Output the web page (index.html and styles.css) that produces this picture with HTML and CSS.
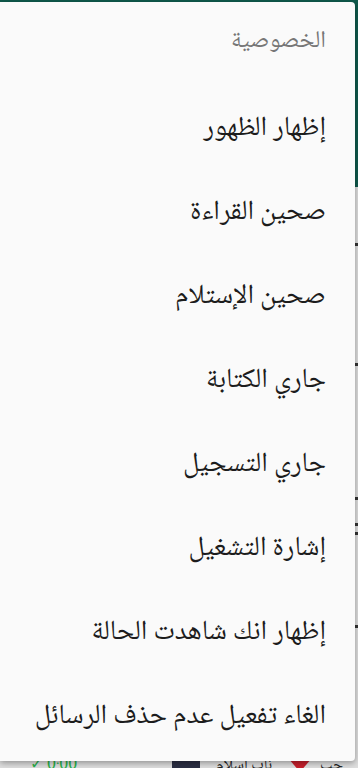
FILE: index.html
```html
<!DOCTYPE html>
<html lang="ar">
<head>
<meta charset="utf-8">
<title>الخصوصية</title>
<link rel="stylesheet" href="styles.css">
</head>
<body>
<div class="screen">
  <div class="appbar"></div>
  <div class="list">
    <div class="row r1"><span class="mark"></span></div>
    <div class="row r2"><span class="mark"></span></div>
    <div class="row r3"><span class="mark"></span></div>
    <div class="row r4"><span class="mark"></span><span class="mark"></span></div>
    <div class="row r5"><span class="mark"></span></div>
    <div class="last">
      <span class="time">✓ 0:00</span>
      <span class="gap"></span>
      <span class="avatar"></span>
      <span class="name">ناب اسلام</span>
      <span class="tri"></span>
      <span class="name2">حب</span>
    </div>
  </div>
</div>
<div class="menu" dir="rtl">
  <div class="title">الخصوصية</div>
  <div class="item">إظهار الظهور</div>
  <div class="item">صحين القراءة</div>
  <div class="item">صحين الإستلام</div>
  <div class="item">جاري الكتابة</div>
  <div class="item">جاري التسجيل</div>
  <div class="item">إشارة التشغيل</div>
  <div class="item">إظهار انك شاهدت الحالة</div>
  <div class="item">الغاء تفعيل عدم حذف الرسائل</div>
</div>
</body>
</html>
```

FILE: styles.css
```css
html, body {
  margin: 0;
  padding: 0;
  width: 358px;
  height: 768px;
  overflow: hidden;
  font-family: "Noto Naskh Arabic", "Noto Sans Arabic", "DejaVu Sans", sans-serif;
}

.screen {
  display: flex;
  flex-direction: column;
  height: 768px;
  background: #dedede;
}

.appbar {
  height: 187px;
  background: #0f5a4c;
  flex: none;
}

.list {
  flex: 1;
  display: flex;
  flex-direction: column;
  align-items: flex-end;
  padding-top: 56px;
}

.row {
  width: 3px;
  display: flex;
  flex-direction: column;
  gap: 6px;
}

.mark {
  display: block;
  width: 3px;
  height: 3px;
  background: #333;
}

.r1 { height: 120px; }
.r2 { height: 134px; }
.r3 { height: 26px; }
.r4 { height: 102px; }
.r5 { height: 84px; }

.last {
  align-self: stretch;
  margin-top: auto;
  height: 10px;
  display: flex;
  align-items: flex-start;
  direction: ltr;
  padding-left: 30px;
  font-size: 16px;
  line-height: 16px;
  overflow: hidden;
}

.time { color: #2bb24c; width: 60px; }
.gap { width: 82px; }
.avatar { width: 28px; height: 16px; background: #2b2f44; border-radius: 3px; }
.name { color: #222; width: 88px; text-align: center; }
.tri {
  width: 0; height: 0;
  border-left: 12px solid transparent;
  border-right: 12px solid transparent;
  border-top: 14px solid #c8202c;
}
.name2 { color: #222; margin-left: 8px; }

.menu {
  position: absolute;
  top: 2px;
  left: 0;
  width: 355px;
  height: 759px;
  background: #fafafa;
  border-radius: 0 4px 4px 0;
  box-shadow: 0 2px 6px rgba(0, 0, 0, 0.35);
  box-sizing: border-box;
  padding-right: 29px;
}

.title {
  height: 85px;
  padding-top: 25px;
  box-sizing: border-box;
  font-size: 24px;
  line-height: 30px;
  color: #767676;
}

.item {
  height: 84px;
  display: flex;
  align-items: center;
  font-size: 27.5px;
  color: #1c1c1c;
}
```
